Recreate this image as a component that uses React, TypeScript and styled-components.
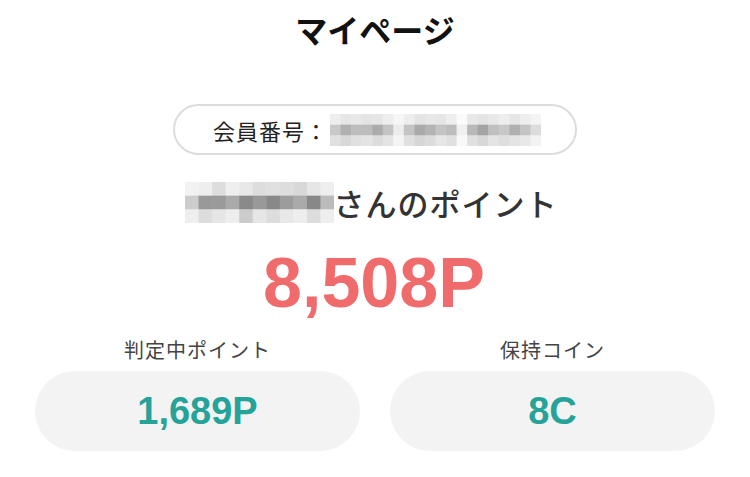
import * as React from 'react'
import styled, { createGlobalStyle } from 'styled-components'

const GlobalStyle = createGlobalStyle`
  html, body {
    margin: 0;
    padding: 0;
    background: #fff;
  }
  body {
    font-family: 'Liberation Sans', 'Noto Sans CJK JP', sans-serif;
    color: #333;
  }
`

const Page = styled.div`
  width: 750px;
  display: flex;
  flex-direction: column;
  align-items: center;
`

const Title = styled.h1`
  margin: 0;
  height: 58px;
  line-height: 58px;
  font-size: 32px;
  font-weight: bold;
  color: #111;
  font-family: 'Noto Sans CJK JP', sans-serif;
`

const MemberBox = styled.div`
  margin-top: 46px;
  box-sizing: border-box;
  width: 404px;
  height: 51px;
  border: 2px solid #dcdcdc;
  border-radius: 26px;
  display: flex;
  align-items: center;
  padding-left: 38px;
  gap: 2px;
`

const MemberLabel = styled.span`
  font-family: 'Noto Sans CJK JP', sans-serif;
  font-size: 22px;
  color: #222;
  letter-spacing: 1px;
`

const NameRow = styled.div`
  margin-top: 25px;
  display: flex;
  align-items: center;
  margin-left: -8px;
`

const NameText = styled.span`
  font-family: 'Noto Sans CJK JP', sans-serif;
  font-size: 31px;
  font-weight: 500;
  color: #333;
  letter-spacing: 1px;
`

const BigPoint = styled.div`
  margin-top: 22px;
  height: 72px;
  line-height: 72px;
  font-size: 70px;
  font-weight: bold;
  color: #f06b6b;
  margin-left: -2px;
`

const Stats = styled.div`
  margin-top: 17px;
  width: 100%;
  box-sizing: border-box;
  padding: 0 35px;
  display: grid;
  grid-template-columns: 1fr 1fr;
  column-gap: 30px;
`

const Stat = styled.div`
  display: flex;
  flex-direction: column;
  align-items: center;
`

const StatLabel = styled.div`
  font-family: 'Noto Sans CJK JP', sans-serif;
  font-size: 20px;
  line-height: 28px;
  color: #444;
  letter-spacing: 1px;
`

const StatPill = styled.div`
  margin-top: 7px;
  width: 100%;
  height: 80px;
  border-radius: 40px;
  background: #f3f3f4;
  display: flex;
  align-items: center;
  justify-content: center;
  font-size: 38px;
  font-weight: bold;
  color: #26a399;
`

interface MosaicProps {
  rows: string[][]
  width: number
  height: number
}

const Mosaic: React.FC<MosaicProps> = ({ rows, width, height }) => {
  const ch = height / rows.length
  return (
    <svg width={width} height={height} style={{ display: 'block' }}>
      {rows.map((row, r) => {
        const cw = width / row.length
        return row.map((c, i) => (
          <rect key={r + '-' + i} x={i * cw} y={r * ch} width={cw + 0.5} height={ch + 0.5} fill={'#' + c} />
        ))
      })}
    </svg>
  )
}

const memberMosaic = [
  ['eee', 'e6e6e6', 'e8e8e8', 'e4e4e4', 'e6e6e6', 'eee', 'f6f6f6', 'eee', 'e4e4e4', 'e8e8e8', 'e6e6e6', 'eee', 'fafafa', 'e8e8e8', 'e4e4e4', 'e8e8e8', 'eee', 'e6e6e6', 'eee', 'f4f4f4'],
  ['c8c8c8', 'b0b0b0', 'bdbdbd', 'bdbdbd', 'acacac', 'c4c4c4', 'ececec', 'c4c4c4', 'aaa', 'b4b4b4', 'c4c4c4', 'bcbcbc', 'f0f0f0', 'b8b8b8', 'a4a4a4', 'c0c0c0', 'c8c8c8', 'b0b0b0', 'c4c4c4', 'dcdcdc'],
  ['e0e0e0', 'd8d8d8', 'e0e0e0', 'e4e4e4', 'dcdcdc', 'e4e4e4', 'f4f4f4', 'e0e0e0', 'd6d6d6', 'dcdcdc', 'e6e6e6', 'e0e0e0', 'f8f8f8', 'e0e0e0', 'd8d8d8', 'e4e4e4', 'dedede', 'e4e4e4', 'e8e8e8', 'f2f2f2'],
]

const nameMosaic = [
  ['f2f2f2', 'eee', 'ddd', 'eee', 'e8e8e8', 'ddd', 'e0e0e0', 'ddd', 'd8d8d8', 'e6e6e6', 'eee'],
  ['ccc', '999', '9a9a9a', 'aaa', '8a8a8a', '999', '888', '9c9c9c', 'aaa', '888', 'bbb'],
  ['eee', 'ddd', 'e6e6e6', 'eee', 'ccc', 'e6e6e6', 'ddd', 'e8e8e8', 'eee', 'ddd', 'eee'],
]

export default function App() {
  return (
    <Page>
      <GlobalStyle />
      <Title>マイページ</Title>
      <MemberBox>
        <MemberLabel>会員番号：</MemberLabel>
        <Mosaic rows={memberMosaic} width={211} height={32} />
      </MemberBox>
      <NameRow>
        <Mosaic rows={nameMosaic} width={149} height={41} />
        <NameText>さんのポイント</NameText>
      </NameRow>
      <BigPoint>8,508P</BigPoint>
      <Stats>
        <Stat>
          <StatLabel>判定中ポイント</StatLabel>
          <StatPill>1,689P</StatPill>
        </Stat>
        <Stat>
          <StatLabel>保持コイン</StatLabel>
          <StatPill>8C</StatPill>
        </Stat>
      </Stats>
    </Page>
  )
}
